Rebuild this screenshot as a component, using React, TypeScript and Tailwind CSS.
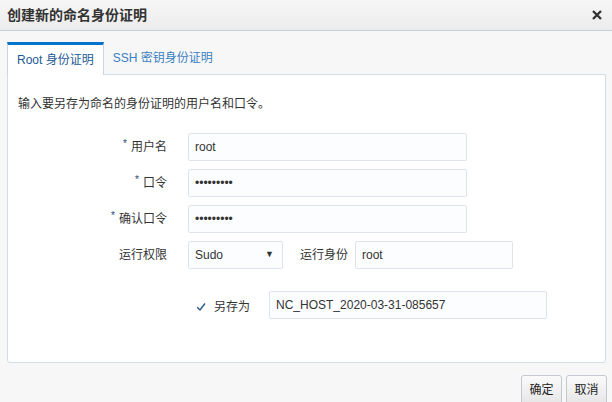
import React, { useState } from 'react';

const font = { fontFamily: '"Liberation Sans", "Noto Sans CJK SC", sans-serif' };

const Label: React.FC<{ text: string; required?: boolean }> = ({ text, required }) => (
    <div className="w-[160px] shrink-0 text-right text-[12px] text-[#333] pr-[1px]">
        {required && <span className="relative -top-[4px] mr-[4px] text-[10px] text-[#24476b]">*</span>}
        {text}
    </div>
);

const Field: React.FC<{ value: string; width: string }> = ({ value, width }) => (
    <div
        className={`${width} h-[28px] flex items-center px-[6px] bg-[#fcfdfe] border border-[#dfe4ea] rounded-[2px] text-[12px] text-[#333]`}
    >
        {value}
    </div>
);

const App: React.FC = () => {
    const [tab, setTab] = useState<'root' | 'ssh'>('root');

    return (
        <div style={font} className="relative w-[612px] h-[402px] bg-[#f7f7f7] flex flex-col overflow-hidden">
            {/* header */}
            <div className="h-[31px] shrink-0 flex items-center justify-between px-[7px] bg-gradient-to-b from-[#f6f6f6] to-[#ececec] border-b border-[#c5ced8]">
                <span className="text-[14px] font-bold text-[#333]">创建新的命名身份证明</span>
                <svg width="12" height="12" viewBox="0 0 12 12" className="mr-[2px]">
                    <path d="M2 2 L10 10 M10 2 L2 10" stroke="#333" strokeWidth="2.4" />
                </svg>
            </div>

            <div className="px-[7px] pt-[11px] pr-[6px]">
                {/* tabs */}
                <div className="flex h-[32px] items-stretch">
                    <button
                        onClick={() => setTab('root')}
                        className={`px-[9px] text-[12px] flex items-center ${
                            tab === 'root'
                                ? 'bg-white border-t-[3px] border-t-[#0572ce] border-x border-x-[#c9d5e0] text-[#1c5a96] relative -mb-px z-10'
                                : 'text-[#3a7fc1]'
                        }`}
                    >
                        Root 身份证明
                    </button>
                    <button
                        onClick={() => setTab('ssh')}
                        className={`px-[9px] text-[12px] flex items-center ${
                            tab === 'ssh'
                                ? 'bg-white border-t-[3px] border-t-[#0572ce] border-x border-x-[#c9d5e0] text-[#1c5a96] relative -mb-px z-10'
                                : 'text-[#3a7fc1]'
                        }`}
                    >
                        SSH 密钥身份证明
                    </button>
                </div>

                {/* panel */}
                <div className="h-[289px] bg-white border border-[#d3dbe3] rounded-b-[3px]">
                    <p className="pl-[10px] pt-[21px] text-[12px] leading-[16px] text-[#333]">
                        输入要另存为命名的身份证明的用户名和口令。
                    </p>

                    <div className="mt-[21px] flex flex-col gap-[8px]">
                        <div className="flex items-center">
                            <Label text="用户名" required />
                            <div className="ml-[20px]">
                                <Field value="root" width="w-[279px]" />
                            </div>
                        </div>
                        <div className="flex items-center">
                            <Label text="口令" required />
                            <div className="ml-[20px]">
                                <Field value="•••••••••" width="w-[279px]" />
                            </div>
                        </div>
                        <div className="flex items-center">
                            <Label text="确认口令" required />
                            <div className="ml-[20px]">
                                <Field value="•••••••••" width="w-[279px]" />
                            </div>
                        </div>
                        <div className="flex items-center">
                            <Label text="运行权限" />
                            <div className="ml-[20px] w-[95px] h-[28px] flex items-center justify-between px-[6px] bg-[#fcfdfe] border border-[#dfe4ea] rounded-[2px] text-[12px] text-[#333]">
                                <span>Sudo</span>
                                <span className="text-[9px] mr-[2px]">▼</span>
                            </div>
                            <span className="ml-[17px] text-[12px] text-[#333]">运行身份</span>
                            <div className="ml-[7px]">
                                <Field value="root" width="w-[158px]" />
                            </div>
                        </div>
                    </div>

                    <div className="mt-[22px] flex items-center">
                        <div className="w-[180px] shrink-0" />
                        <div className="flex items-center pt-[4px]">
                            <svg width="10" height="10" viewBox="0 0 10 10" className="ml-[8px]">
                                <path d="M1.2 5.2 L4 8 L9 1.5" fill="none" stroke="#2c5685" strokeWidth="1.4" />
                            </svg>
                            <span className="ml-[8px] text-[12px] text-[#333]">另存为</span>
                        </div>
                        <div className="ml-[19px]">
                            <Field value="NC_HOST_2020-03-31-085657" width="w-[278px]" />
                        </div>
                    </div>
                </div>
            </div>

            {/* footer buttons */}
            <div className="flex justify-end gap-[4px] pr-[5px] mt-[12px]">
                <button className="w-[41px] h-[30px] rounded-t-[3px] border border-[#c4c9cf] bg-gradient-to-b from-[#fafafa] to-[#e6e6e6] text-[12px] text-[#222]">
                    确定
                </button>
                <button className="w-[41px] h-[30px] rounded-t-[3px] border border-[#c4c9cf] bg-gradient-to-b from-[#fafafa] to-[#e6e6e6] text-[12px] text-[#222]">
                    取消
                </button>
            </div>
        </div>
    );
};

export default App;
